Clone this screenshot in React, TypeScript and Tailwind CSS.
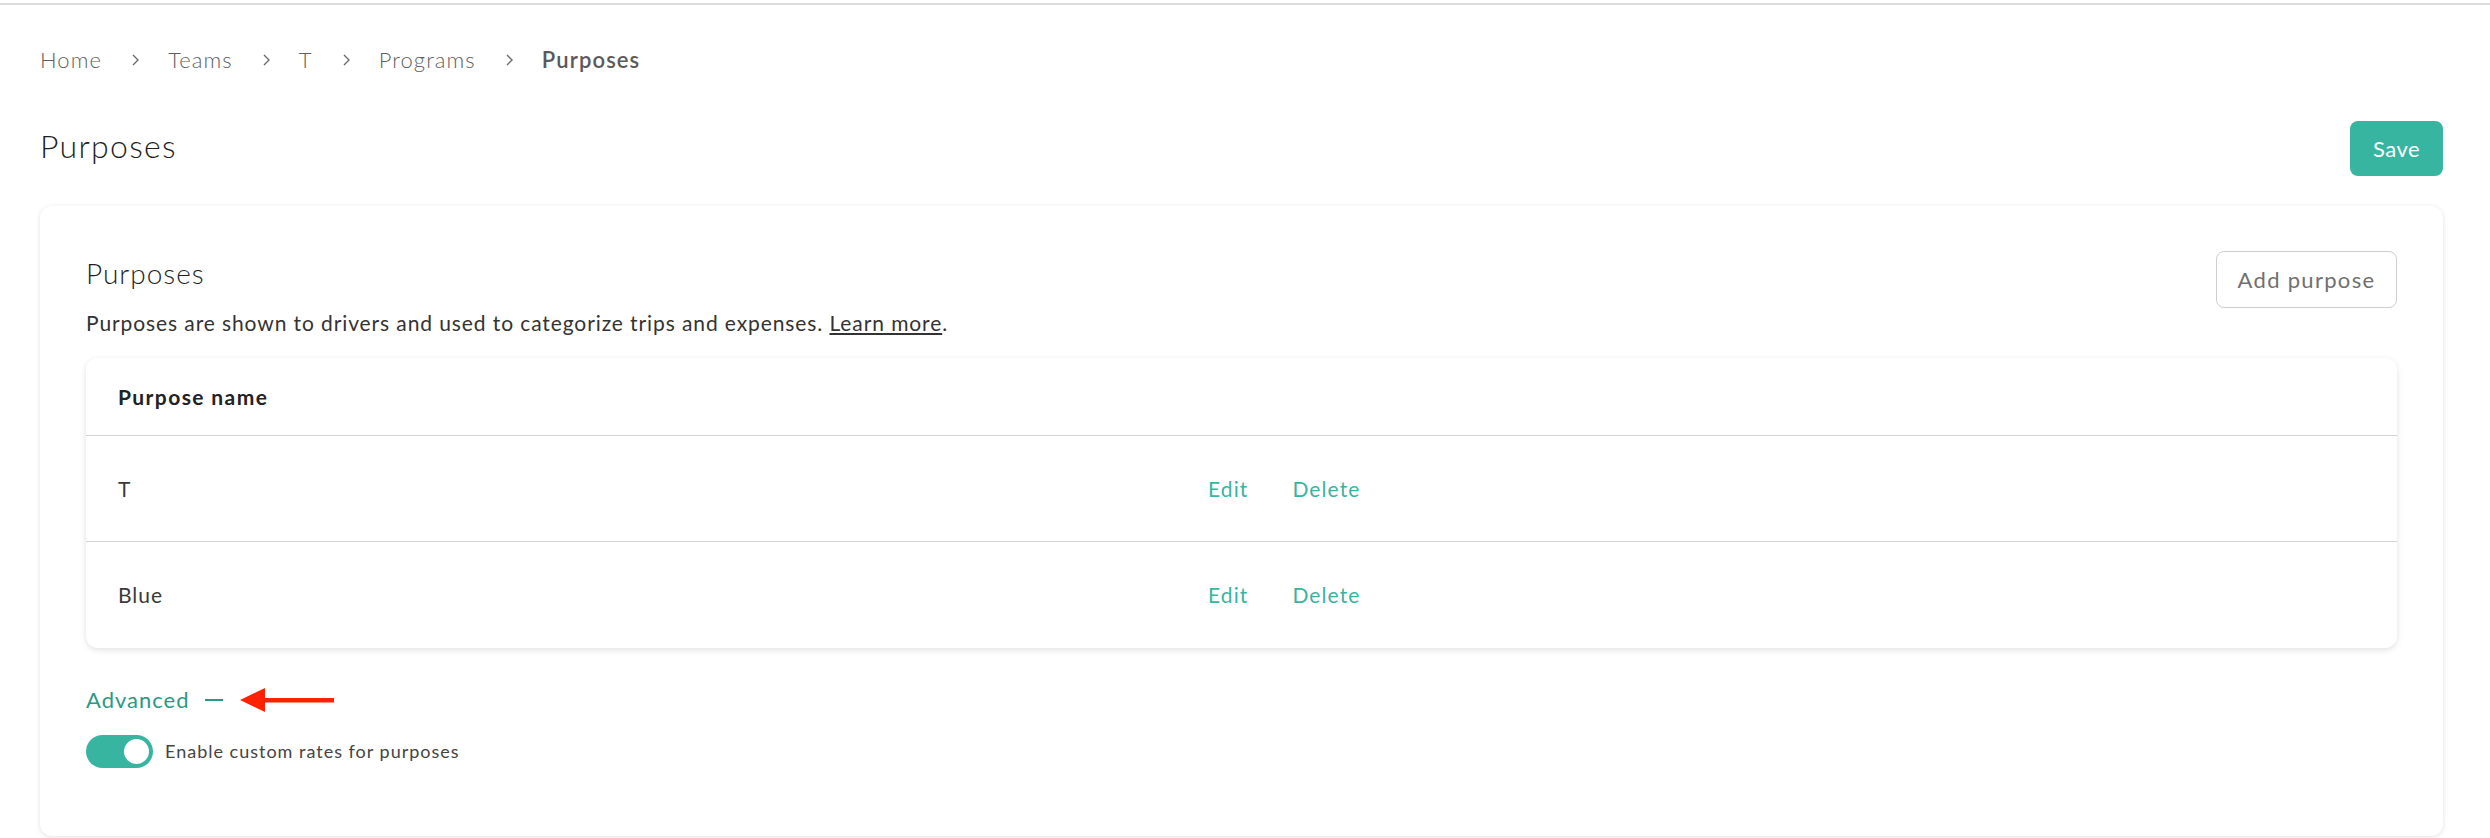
const teal = "#38b5a0";

function Chevron() {
  return (
    <svg width="10" height="14" viewBox="0 0 10 14" className="mx-[28px]">
      <path d="M3 2 L8 7 L3 12" fill="none" stroke="#6b6b6b" strokeWidth="1.4" />
    </svg>
  );
}

function Breadcrumb() {
  const items = ["Home", "Teams", "T", "Programs"];
  return (
    <nav className="flex items-center text-[22px] leading-[30px] tracking-[1.1px] text-[#5f5f5f]">
      {items.map((it) => (
        <span key={it} className="flex items-center">
          <span className="font-light">{it}</span>
          <Chevron />
        </span>
      ))}
      <span className="font-semibold text-[#5a5a5a]">Purposes</span>
    </nav>
  );
}

function Row({ name, last }: { name: string; last?: boolean }) {
  return (
    <div
      className={
        "grid grid-cols-[1090px_1fr] items-center h-[106px] px-[32px] " +
        (last ? "" : "border-b border-[#d4d4d4]")
      }
    >
      <span className="text-[21px] tracking-[1px] text-[#3a3a3a]">{name}</span>
      <div className="flex items-center gap-[44px] text-[21px] tracking-[1.1px] text-[#38b5a0]">
        <span>Edit</span>
        <span>Delete</span>
      </div>
    </div>
  );
}

export default function App() {
  return (
    <div className="min-h-screen bg-white font-['Lato',sans-serif] text-[#333]">
      <div className="mt-[3px] h-[2px] bg-[#dcdcdc]" />
      <div className="pl-[40px] pr-[47px]">
        <div className="pt-[40px]">
          <Breadcrumb />
        </div>
        <div className="mt-[46px] flex items-center justify-between">
          <h1 className="pb-[6px] text-[32px] leading-[40px] font-light tracking-[1.3px] text-[#1f1f1f]">Purposes</h1>
          <button
            className="h-[55px] w-[93px] rounded-[8px] text-[22px] tracking-[0.5px] text-white"
            style={{ backgroundColor: teal }}
          >
            Save
          </button>
        </div>

        <div className="mt-[30px] rounded-[12px] bg-white px-[46px] pt-[45px] pb-[68px] shadow-[0_1px_5px_rgba(0,0,0,0.12)]">
          <div className="flex items-start justify-between">
            <div>
              <h2 className="mt-[4px] text-[28px] leading-[36px] font-light tracking-[1px] text-[#1f1f1f]">Purposes</h2>
              <p className="mt-[18px] text-[21px] leading-[28px] tracking-[0.9px] text-[#333]">
                Purposes are shown to drivers and used to categorize trips and expenses.{" "}
                <span className="underline underline-offset-2">Learn more</span>.
              </p>
            </div>
            <button className="h-[57px] w-[181px] rounded-[8px] border border-[#cfcfcf] text-[22px] tracking-[1.3px] text-[#707070]">
              Add purpose
            </button>
          </div>

          <div className="mt-[21px] rounded-[12px] bg-white shadow-[0_2px_6px_rgba(0,0,0,0.12)]">
            <div className="flex h-[78px] items-center border-b border-[#d4d4d4] px-[32px]">
              <span className="text-[21px] font-bold tracking-[1.4px] text-[#222]">Purpose name</span>
            </div>
            <Row name="T" />
            <Row name="Blue" last />
          </div>

          <div className="mt-[38px] flex items-center leading-[28px]">
            <span className="text-[22px] tracking-[1px] text-[#2a9986]">Advanced</span>
            <span className="ml-[15px] h-[2px] w-[18px] bg-[#2a9986]" />
            <svg width="96" height="28" viewBox="0 0 96 28" className="ml-[17px]">
              <path d="M0 14 L25 2 L25 26 Z" fill="#ff2200" />
              <rect x="24" y="12" width="70" height="4.5" fill="#ff2200" />
            </svg>
          </div>

          <div className="mt-[21px] flex items-center gap-[12px]">
            <div
              className="flex h-[33px] w-[67px] items-center justify-end rounded-full px-[2px]"
              style={{ backgroundColor: teal }}
            >
              <div className="h-[29px] w-[29px] rounded-full border-2 border-[#38b5a0] bg-white" />
            </div>
            <span className="text-[18px] tracking-[1px] text-[#444]">Enable custom rates for purposes</span>
          </div>
        </div>
      </div>
    </div>
  );
}
